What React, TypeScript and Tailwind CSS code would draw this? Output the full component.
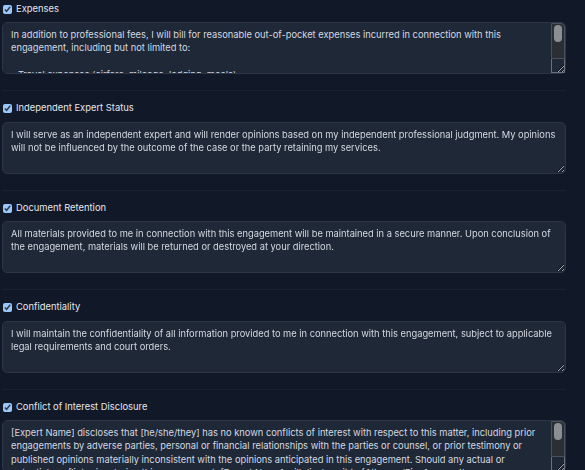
import { useState } from "react";

const SECTIONS = [
  {
    id: "expenses",
    title: "Expenses",
    overflow: true,
    text: "In addition to professional fees, I will bill for reasonable out-of-pocket expenses incurred in connection with this engagement, including but not limited to:\n\n- Travel expenses (airfare, mileage, lodging, meals)\n- Courier and shipping charges\n- Copying and document production\n- Research database fees",
  },
  {
    id: "independent",
    title: "Independent Expert Status",
    overflow: false,
    text: "I will serve as an independent expert and will render opinions based on my independent professional judgment. My opinions will not be influenced by the outcome of the case or the party retaining my services.",
  },
  {
    id: "retention",
    title: "Document Retention",
    overflow: false,
    text: "All materials provided to me in connection with this engagement will be maintained in a secure manner. Upon conclusion of the engagement, materials will be returned or destroyed at your direction.",
  },
  {
    id: "confidentiality",
    title: "Confidentiality",
    overflow: false,
    text: "I will maintain the confidentiality of all information provided to me in connection with this engagement, subject to applicable legal requirements and court orders.",
  },
  {
    id: "conflict",
    title: "Conflict of Interest Disclosure",
    overflow: true,
    text: "[Expert Name] discloses that [he/she/they] has no known conflicts of interest with respect to this matter, including prior engagements by adverse parties, personal or financial relationships with the parties or counsel, or prior testimony or published opinions materially inconsistent with the opinions anticipated in this engagement. Should any actual or potential conflict arise during this engagement, [Expert Name] will disclose it to [Attorney/Firm] promptly.",
  },
];

// headless page hides native scrollbars, so the overflowing boxes get a drawn one
const FakeScrollbar = () => (
  <div className="pointer-events-none absolute bottom-[1px] right-[1px] top-[1px] flex w-[14px] flex-col">
    <div className="flex-1 rounded-tr-[4px] border border-[#4b5059] bg-[#2b2e34] px-[2px] pt-[1px]">
      <div className="h-[17px] w-[8px] rounded-full bg-[#8b8e93]" />
    </div>
    <div className="h-[14px] border border-t-0 border-[#6b7078]" />
  </div>
);

const App = () => {
  const [checked, setChecked] = useState(SECTIONS.map(() => true));
  const [texts, setTexts] = useState(SECTIONS.map((s) => s.text));

  return (
    <div
      className="h-[470px] w-[585px] overflow-hidden bg-[#111827] [color-scheme:dark]"
      style={{ fontFamily: "Inter, 'Noto Sans', sans-serif" }}
    >
      <div className="w-[568px] px-[2px]">
        {SECTIONS.map((section, idx) => (
          <div
            key={section.id}
            className={`border-b border-[#1a2231] pb-4 ${idx === 0 ? "pt-[2px]" : "pt-[10.5px]"}`}
          >
            <label className="flex h-[14px] items-center gap-[4px] pl-[1px]">
              <input
                type="checkbox"
                checked={checked[idx]}
                onChange={() =>
                  setChecked((prev) => prev.map((v, i) => (i === idx ? !v : v)))
                }
                className="m-0 h-[9px] w-[9px]"
              />
              <span className="text-[9.4px] text-[#e5e7eb]">{section.title}</span>
            </label>
            <div className="relative mt-[6px]">
              <textarea
                value={texts[idx]}
                onChange={(e) =>
                  setTexts((prev) =>
                    prev.map((v, i) => (i === idx ? e.target.value : v))
                  )
                }
                rows={3}
                className={`block h-[52px] w-full resize-y rounded-[5px] border border-[#2c3646] bg-[#1e2837] py-[5px] pl-[8px] text-[9.3px] leading-[13.4px] text-[#d5d9e0] outline-none ${
                  section.overflow ? "pr-[22px]" : "pr-[8px]"
                }`}
              />
              {section.overflow && <FakeScrollbar />}
            </div>
          </div>
        ))}
      </div>
    </div>
  );
};

export default App;
